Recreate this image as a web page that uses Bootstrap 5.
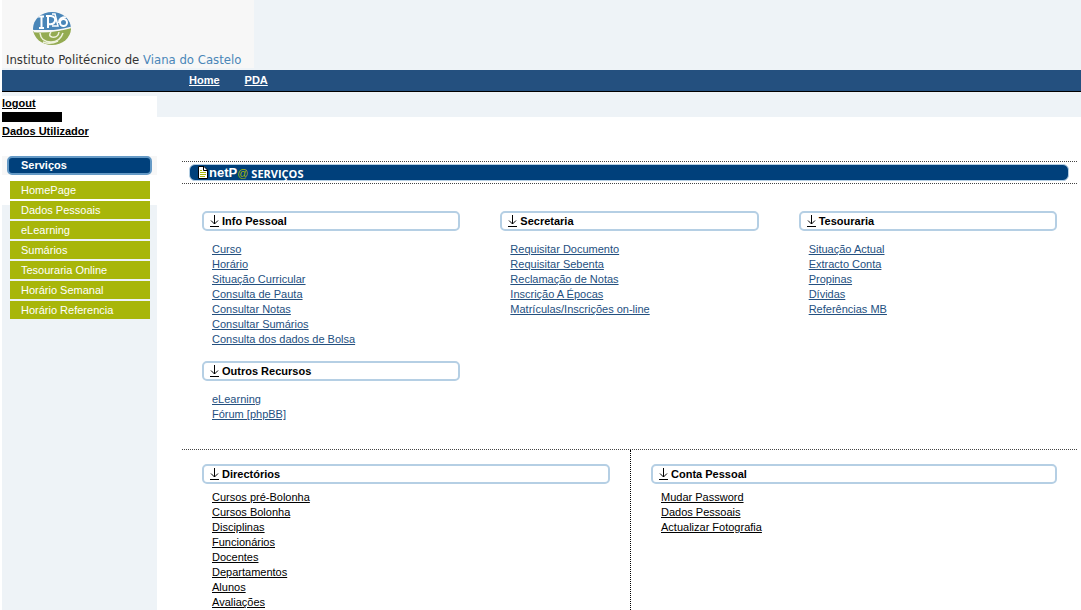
<!DOCTYPE html>
<html lang="pt">
<head>
<meta charset="utf-8">
<meta name="viewport" content="width=device-width, initial-scale=1">
<title>netP@ Serviços</title>
<link href="https://cdn.jsdelivr.net/npm/bootstrap@5.3.0/dist/css/bootstrap.min.css" rel="stylesheet">
<style>
  body { font: 11px/15px "Liberation Sans", Arial, sans-serif; color: #000; background: #fff; padding-left: 2px; overflow-x: hidden; }
  a { color: inherit; }
  a:hover { color: #a8b60a; }
  .sky { background: #eef3f7; }
  .brand { width: 252px; height: 68px; background: #f7f7f7; padding: 10px 0 0 4px; margin-bottom: 2px; }
  .brand svg { display: block; margin-left: 26px; }
  .brand-name { font: 13px/18px "DejaVu Sans Condensed", "Trebuchet MS", sans-serif; color: #333; white-space: nowrap; margin-top: 4px; }
  .brand-name span { color: #4a86b8; }
  .topnav { background: #24507f; border-bottom: 1px solid #000; height: 22px; padding-left: 187px; gap: 25px; line-height: 21px; color: #fff; }
  .side { width: 155px; flex: none; }
  .side-user { background: #fff; margin-top: 4px; height: 60px; line-height: 14px; }
  .masked { width: 60px; height: 10px; background: #000; margin: 2px 0; }
  .side-head { background: #f7f7f7; padding: 0 5px; }
  .side-head h2 { font-size: 11px; line-height: 15px; font-weight: bold; margin: 0; padding: 0 12px; color: #fff; background: #00407b; border: 2px solid #659ac6; border-radius: 5px; }
  .side-menu { background: linear-gradient(#fff 30px, #eef3f7 30px); flex: 1; padding: 6px 7px 0 8px; }
  .side-menu a { display: block; background: #a8b60a; color: #fff; line-height: 18px; padding-left: 11px; margin-bottom: 2px; text-decoration: none; }
  .strip { height: 25px; }
  .content { margin: 44px 4px 0 25px; }
  .dotted-t { border-top: 1px dotted #444; }
  .title-row { border-top: 1px dotted #444; border-bottom: 1px dotted #444; padding: 2px 8px 2px 7px; }
  .title-bar { height: 17px; background: #00407b; border: 1px solid #b3cde2; border-radius: 6px; color: #fff; padding-left: 8px; }
  .title-bar h1 { font: bold 11px/16px "Open Sans", Verdana, sans-serif; margin: 1px 0 0 3px; }
  .logo-net { font: bold 13px/15px "Liberation Sans", Arial, sans-serif; padding-left: 1px; }
  .logo-net span { font: 11px/15px "Liberation Sans", Arial, sans-serif; color: #a8b60a; }
  .blocks { display: grid; grid-template-columns: repeat(3, 1fr); column-gap: 40px; padding: 27px 20px 3px 20px; }
  .box-head { border: 2px solid #b5cfe4; border-radius: 5px; height: 20px; padding-left: 6px; gap: 3px; }
  .box-head h3 { font-size: 11px; line-height: 16px; font-weight: bold; margin: 0; }
  .box-links { list-style: none; margin: 0; padding: 11px 0 14px 10px; }
  .blue-links { color: #24507f; }
  .box-links.tight { padding-top: 6px; }
  .half { padding: 14px 20px 0 20px; }
  .half-first { width: 449px; flex: none; border-right: 1px dotted #000; }
</style>
</head>
<body class="d-flex flex-column min-vh-100">
<svg width="0" height="0" class="position-absolute" aria-hidden="true">
  <symbol id="arrow" viewBox="0 0 9 12"><path d="M4.500 0v9M1 5.500l3.500 3.500 3.500-3.500M0 11.500h9" fill="none" stroke="#000"/></symbol>
</svg>
<header class="sky">
  <div class="brand">
    <svg width="40" height="37" viewBox="0 0 40 37" role="img" aria-label="IPVC">
      <clipPath id="disc"><ellipse cx="20" cy="18.500" rx="19" ry="16.500"/></clipPath>
      <g clip-path="url(#disc)">
        <path d="M0 0h40v20H0z" fill="#4a86b8"/>
        <path d="M0 21q20 3 40-4v20H0z" fill="#94ab52"/>
        <path d="M2 21.500q19 1 37-4" stroke="#f7f7f7" stroke-width="1.500" fill="none"/>
        <path d="M6 6.500h6M9.500 6.500v11M7 18h5M14 6h5q5 1 4 5-1 4-6 3M16 7v11" fill="none" stroke="#fff" stroke-width="2"/>
        <path d="M20 4h3l3 12h-6" fill="none" stroke="#fff" stroke-width="1.500"/>
        <path d="M34 7q-7 0-7 6" fill="none" stroke="#fff" stroke-width="2"/>
        <circle cx="31.500" cy="12.500" r="3.500" fill="none" stroke="#fff" stroke-width="2"/>
        <path d="M8 23q1 9 11 9 9 0 12-9M19 22q-3 4 1 5 6 1 7-5M11 32q7 3 15-1" fill="none" stroke="#eef2dc" stroke-width="1.500"/>
      </g>
    </svg>
    <div class="brand-name">Instituto Politécnico de <span>Viana do Castelo</span></div>
  </div>
</header>
<nav class="topnav d-flex fw-bold"><a href="#">Home</a><a href="#">PDA</a></nav>
<div class="d-flex flex-grow-1">
  <aside class="side sky d-flex flex-column">
    <div class="side-user fw-bold"><a href="#">logout</a><div class="masked"></div><a href="#">Dados Utilizador</a></div>
    <div class="side-head"><h2>Serviços</h2></div>
    <nav class="side-menu">
      <a href="#">HomePage</a><a href="#">Dados Pessoais</a><a href="#">eLearning</a><a href="#">Sumários</a><a href="#">Tesouraria Online</a><a href="#">Horário Semanal</a><a href="#">Horário Referencia</a>
    </nav>
  </aside>
  <main class="flex-grow-1 d-flex flex-column">
    <div class="strip sky"></div>
    <div class="content d-flex flex-column flex-grow-1">
      <div class="title-row">
        <div class="title-bar d-flex">
          <svg width="10" height="14" viewBox="0 0 10 14" aria-hidden="true"><path d="M.500 1.500h5.500l3.500 3.500v8.500h-9z" fill="#fff" stroke="#000"/><path d="M5.500 2v3.500h4" fill="none" stroke="#000"/><path d="M2 5.500h2M2 7.500h6M2 9.500h6M2 11.500h5" stroke="#a8b60a"/></svg>
          <div class="logo-net">netP<span>@</span></div>
          <h1>SERVIÇOS</h1>
        </div>
      </div>
      <div class="blocks">
        <section>
          <div class="box-head d-flex align-items-center"><svg width="9" height="12"><use href="#arrow"/></svg><h3>Info Pessoal</h3></div>
          <ul class="box-links blue-links"><li><a href="#">Curso</a></li><li><a href="#">Horário</a></li><li><a href="#">Situação Curricular</a></li><li><a href="#">Consulta de Pauta</a></li><li><a href="#">Consultar Notas</a></li><li><a href="#">Consultar Sumários</a></li><li><a href="#">Consulta dos dados de Bolsa</a></li></ul>
        </section>
        <section>
          <div class="box-head d-flex align-items-center"><svg width="9" height="12"><use href="#arrow"/></svg><h3>Secretaria</h3></div>
          <ul class="box-links blue-links"><li><a href="#">Requisitar Documento</a></li><li><a href="#">Requisitar Sebenta</a></li><li><a href="#">Reclamação de Notas</a></li><li><a href="#">Inscrição A Épocas</a></li><li><a href="#">Matrículas/Inscrições on-line</a></li></ul>
        </section>
        <section>
          <div class="box-head d-flex align-items-center"><svg width="9" height="12"><use href="#arrow"/></svg><h3>Tesouraria</h3></div>
          <ul class="box-links blue-links"><li><a href="#">Situação Actual</a></li><li><a href="#">Extracto Conta</a></li><li><a href="#">Propinas</a></li><li><a href="#">Dívidas</a></li><li><a href="#">Referências MB</a></li></ul>
        </section>
        <section>
          <div class="box-head d-flex align-items-center"><svg width="9" height="12"><use href="#arrow"/></svg><h3>Outros Recursos</h3></div>
          <ul class="box-links blue-links pb-4"><li><a href="#">eLearning</a></li><li><a href="#">Fórum [phpBB]</a></li></ul>
        </section>
      </div>
      <div class="dotted-t d-flex flex-grow-1">
        <section class="half half-first">
          <div class="box-head d-flex align-items-center"><svg width="9" height="12"><use href="#arrow"/></svg><h3>Directórios</h3></div>
          <ul class="box-links tight pb-0"><li><a href="#">Cursos pré-Bolonha</a></li><li><a href="#">Cursos Bolonha</a></li><li><a href="#">Disciplinas</a></li><li><a href="#">Funcionários</a></li><li><a href="#">Docentes</a></li><li><a href="#">Departamentos</a></li><li><a href="#">Alunos</a></li><li><a href="#">Avaliações</a></li></ul>
        </section>
        <section class="half flex-grow-1">
          <div class="box-head d-flex align-items-center"><svg width="9" height="12"><use href="#arrow"/></svg><h3>Conta Pessoal</h3></div>
          <ul class="box-links tight"><li><a href="#">Mudar Password</a></li><li><a href="#">Dados Pessoais</a></li><li><a href="#">Actualizar Fotografia</a></li></ul>
        </section>
      </div>
    </div>
  </main>
</div>
<script src="https://cdn.jsdelivr.net/npm/bootstrap@5.3.0/dist/js/bootstrap.bundle.min.js"></script>
</body>
</html>
